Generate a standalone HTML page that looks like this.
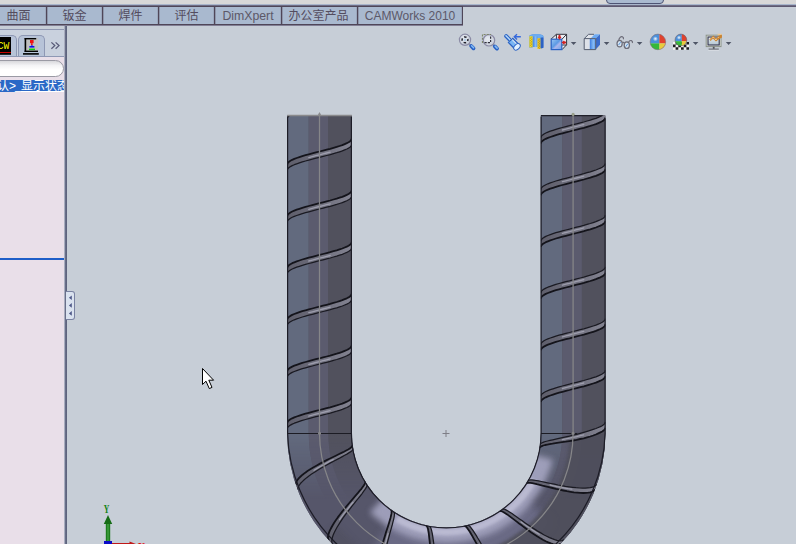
<!DOCTYPE html>
<html lang="zh-CN">
<head>
<meta charset="utf-8">
<title>SolidWorks</title>
<style>
html,body{margin:0;padding:0;}
body{width:796px;height:544px;overflow:hidden;position:relative;background:#c7ced7;
 font-family:"Liberation Sans","Noto Sans CJK SC",sans-serif;font-size:12px;color:#50485c;}
#topstrip{position:absolute;left:0;top:0;width:796px;height:4px;background:#d8d8d8;}
#topline1{position:absolute;left:0;top:4px;width:796px;height:1px;background:#a9b6cc;}
#topline2{position:absolute;left:0;top:5px;width:796px;height:2px;background:linear-gradient(#77768e,#544e66);}
#toptab{position:absolute;left:606px;top:-6px;width:56px;height:8px;background:#aabad0;border:1px solid #4e5474;border-radius:4px;}
#tabs{box-shadow:0 1px 0 #827f95;position:absolute;left:-10px;top:6px;height:17px;display:flex;background:#4f4658;padding:1px 1px 1px 0;}
#tabs .t{box-shadow:inset 1px 0 0 rgba(79,70,88,.3),inset -1px 0 0 rgba(79,70,88,.15);height:17px;line-height:19px;margin-left:1px;background:#a9b9cf;text-align:center;color:#544c5e;white-space:nowrap;font-size:12px;}
#tabs .t.en{color:#5c5868;font-size:12.5px;}
#panel{position:absolute;left:0;top:29px;width:64px;height:515px;background:#e9dfe9;overflow:hidden;}
#ptop{position:absolute;left:0;top:0;width:64px;height:1px;background:#8e96b0;}
#ptabs{position:absolute;left:0;top:1px;width:64px;height:26px;background:#c9d1de;}
#ptabline{position:absolute;left:0;top:27px;width:64px;height:1px;background:#8e98b4;}
.ptab{position:absolute;top:6px;height:21px;background:#b7c3d8;border:1px solid #8e98b4;border-bottom:none;border-radius:5px 5px 0 0;box-sizing:border-box;}
#search{position:absolute;left:-12px;top:31px;width:76px;height:17px;border:1px solid #9a9aa4;border-radius:9px;box-sizing:border-box;background:linear-gradient(#d8d8dc 0,#f4f4f6 30%,#ffffff 60%,#ffffff 100%);}
#sel{position:absolute;left:0;top:51px;width:64px;height:12px;background:#2a68c6;color:#fff;overflow:hidden;white-space:nowrap;}
#sel span{position:absolute;top:-2px;line-height:16px;font-size:12px;}
#blueline{position:absolute;left:0;top:229px;width:64px;height:2px;background:#1e5ec8;}
#pborder{position:absolute;left:64px;top:26px;width:3px;height:518px;background:linear-gradient(90deg,#d4d8e4 0,#6c728c 40%,#585e78 100%);}
#handle{position:absolute;left:66px;top:291px;width:9px;height:29px;background:#dae2ef;border:1px solid #7a82a2;border-left:none;border-radius:0 3px 3px 0;box-sizing:border-box;}
#view{position:absolute;left:0;top:0;}
</style>
</head>
<body>
<div id="topstrip"></div>
<div id="toptab"></div>
<div id="topline1"></div>
<div id="topline2"></div>

<div id="tabs">
 <div class="t" style="width:55px">曲面</div>
 <div class="t" style="width:55px">钣金</div>
 <div class="t" style="width:55px">焊件</div>
 <div class="t" style="width:55px">评估</div>
 <div class="t en" style="width:66px;font-size:12.3px">DimXpert</div>
 <div class="t" style="width:73px;padding-right:2px">办公室产品</div>
 <div class="t en" style="width:104px;font-size:12px">CAMWorks 2010</div>
</div>

<div id="panel">
 <div id="ptop"></div>
 <div id="ptabs"></div>
 <div class="ptab" style="left:-8px;width:25px"></div>
 <div class="ptab" style="left:18px;width:27px"></div>
 <div id="ptabline"></div>
 <div id="search"></div>
 <div id="sel"><span style="left:-3px">认</span><span style="left:9px">&gt;</span><span style="left:15px;top:-3px">_</span><span style="left:21px;text-decoration:underline">显示状态</span></div>
 <div id="blueline"></div>
</div>
<div id="pborder"></div>
<div id="handle"></div>

<svg id="view" width="796" height="544" viewBox="0 0 796 544">
<!--GEOM-->
<defs>
<clipPath id="body"><path d="M287.2,115.5 V433 A159.1,159.1 0 0 0 605.4,433 V115.5 H540.9 V433 A94.5,94.5 0 0 1 351.8,433 V115.5 Z"/></clipPath>
<filter id="bl3" x="-20%" y="-20%" width="140%" height="140%"><feGaussianBlur stdDeviation="3"/></filter>
<filter id="bl2" x="-20%" y="-20%" width="140%" height="140%"><feGaussianBlur stdDeviation="1.6"/></filter>
<linearGradient id="fadeL" x1="0" y1="433" x2="0" y2="500" gradientUnits="userSpaceOnUse"><stop offset="0" stop-color="#fff" stop-opacity="1"/><stop offset="1" stop-color="#fff" stop-opacity="0"/></linearGradient>
<mask id="mfade" maskUnits="userSpaceOnUse" x="250" y="420" width="400" height="130"><rect x="250" y="420" width="400" height="130" fill="url(#fadeL)"/></mask>
<linearGradient id="gGr" x1="0" y1="0" x2="1" y2="0"><stop offset="0" stop-color="#5e5e6b"/><stop offset="0.45" stop-color="#6c6c7a"/><stop offset="1" stop-color="#838391"/></linearGradient>
</defs>
<g clip-path="url(#body)">
<rect x="280" y="110" width="340" height="440" fill="#51515d"/>
<rect x="287.2" y="110" width="21.5" height="323" fill="#626a7e"/>
<rect x="308.8" y="110" width="19.5" height="323" fill="#5b5b6e"/>
<rect x="328.2" y="110" width="23.5" height="323" fill="#51515d"/>
<rect x="540.9" y="110" width="21.5" height="323" fill="#626a7e"/>
<rect x="562.4" y="110" width="19.5" height="323" fill="#5b5b6e"/>
<rect x="581.9" y="110" width="23.5" height="323" fill="#51515d"/>
<path d="M319.5,433 A126.8,126.8 0 0 0 573.1,433" fill="none" stroke="#56566a" stroke-width="66.5" />
<g mask="url(#mfade)">
<path d="M298,433 A148.3,148.3 0 0 0 372.1,561.4" fill="none" stroke="#626a7e" stroke-width="21.5" />
<path d="M318.5,433 A127.8,127.8 0 0 0 382.4,543.7" fill="none" stroke="#5b5b6e" stroke-width="19.5" />
<path d="M340,433 A106.3,106.3 0 0 0 393.1,525.1" fill="none" stroke="#51515d" stroke-width="23.5" />
<path d="M498.9,524.2 A105.3,105.3 0 0 0 551.6,433" fill="none" stroke="#626a7e" stroke-width="21.5" />
<path d="M509.2,541.9 A125.8,125.8 0 0 0 572.1,433" fill="none" stroke="#5b5b6e" stroke-width="19.5" />
<path d="M520,560.6 A147.3,147.3 0 0 0 593.6,433" fill="none" stroke="#51515d" stroke-width="23.5" />
</g>
<filter id="bl5" x="-20%" y="-20%" width="140%" height="140%"><feGaussianBlur stdDeviation="5"/></filter>
<path d="M382.3,535.4 A120.8,120.8 0 0 0 538.8,510.6" fill="none" stroke="#6e6e8a" stroke-width="34" filter="url(#bl5)" opacity="0.85"/>
<path d="M377.8,503.9 A98.5,98.5 0 0 0 541.9,456.8" fill="none" stroke="#a2a2be" stroke-width="23" filter="url(#bl3)" opacity="0.95"/>
<path d="M396.8,518.8 A99,99 0 0 0 533.8,479.5" fill="none" stroke="#c4c4da" stroke-width="7" filter="url(#bl2)" opacity="0.75"/>
<path d="M331.4,529.5 A150.1,150.1 0 0 0 472.4,580.8" fill="none" stroke="#4e4e5a" stroke-width="14" filter="url(#bl3)" opacity="0.45"/>
<path d="M461.1,574.3 A142.1,142.1 0 0 0 588.4,433" fill="none" stroke="#50505c" stroke-width="38" filter="url(#bl2)" opacity="0.92"/>
<path d="M287.2,433.5 H351.8" stroke="#1c1c24" stroke-width="1" fill="none"/>
<path d="M540.9,433.5 H577.1" stroke="#1c1c24" stroke-width="1" fill="none"/>
<polygon points="351.8,105.5 351.5,105.5 350.9,105.5 349.9,105.5 348.6,105.5 346.8,105.5 344.7,105.5 342.3,105.5 339.6,105.5 336.7,105.5 333.5,105.5 330.2,105.5 326.7,105.5 323.1,105.5 319.5,105.5 315.9,105.5 312.3,105.5 308.8,105.5 305.5,105.5 302.3,105.5 299.4,105.5 296.7,106.3 294.3,107.2 292.2,108.1 290.4,109.1 289.1,110 288.1,110.9 287.5,111.8 287.2,112.8 287.2,118.5 287.5,117.6 288.1,116.7 289.1,115.8 290.4,114.9 292.2,113.9 294.3,113 296.7,112.1 299.4,111.2 302.3,110.2 305.5,109.3 308.8,108.4 312.3,107.5 315.9,106.5 319.5,105.6 323.1,105.5 326.7,105.5 330.2,105.5 333.5,105.5 336.7,105.5 339.6,105.5 342.3,105.5 344.7,105.5 346.8,105.5 348.6,105.5 349.9,105.5 350.9,105.5 351.5,105.5 351.8,105.5" fill="url(#gGr)" stroke="none"/>
<polyline points="330.2,105.5 326.7,105.5 323.1,105.5 319.5,105.5 315.9,105.5 312.3,105.5 308.8,105.9" fill="none" stroke="#a9a9b9" stroke-width="1.3" stroke-linecap="round" opacity="0.8"/>
<polyline points="351.8,105.5 351.5,105.5 350.9,105.5 349.9,105.5 348.6,105.5 346.8,105.5 344.7,105.5 342.3,105.5 339.6,105.5 336.7,105.5 333.5,105.5 330.2,105.5 326.7,105.5 323.1,105.5 319.5,105.5 315.9,105.5 312.3,105.5 308.8,105.5 305.5,105.5 302.3,105.5 299.4,105.5 296.7,106.3 294.3,107.2 292.2,108.1 290.4,109.1 289.1,110 288.1,110.9 287.5,111.8 287.2,112.8" fill="none" stroke="#14141b" stroke-width="1.8" stroke-linejoin="round"/>
<polyline points="351.8,105.5 351.5,105.5 350.9,105.5 349.9,105.5 348.6,105.5 346.8,105.5 344.7,105.5 342.3,105.5 339.6,105.5 336.7,105.5 333.5,105.5 330.2,105.5 326.7,105.5 323.1,105.5 319.5,105.6 315.9,106.5 312.3,107.5 308.8,108.4 305.5,109.3 302.3,110.2 299.4,111.2 296.7,112.1 294.3,113 292.2,113.9 290.4,114.9 289.1,115.8 288.1,116.7 287.5,117.6 287.2,118.5" fill="none" stroke="#1a1a22" stroke-width="1.25" stroke-linejoin="round"/>
<polygon points="351.8,138.6 351.5,139.5 350.9,140.4 349.9,141.4 348.6,142.3 346.8,143.2 344.7,144.1 342.3,145.1 339.6,146 336.7,146.9 333.5,147.8 330.2,148.8 326.7,149.7 323.1,150.6 319.5,151.5 315.9,152.4 312.3,153.4 308.8,154.3 305.5,155.2 302.3,156.1 299.4,157.1 296.7,158 294.3,158.9 292.2,159.8 290.4,160.8 289.1,161.7 288.1,162.6 287.5,163.5 287.2,164.5 287.2,170.2 287.5,169.3 288.1,168.4 289.1,167.5 290.4,166.6 292.2,165.6 294.3,164.7 296.7,163.8 299.4,162.9 302.3,161.9 305.5,161 308.8,160.1 312.3,159.2 315.9,158.2 319.5,157.3 323.1,156.4 326.7,155.5 330.2,154.6 333.5,153.6 336.7,152.7 339.6,151.8 342.3,150.9 344.7,149.9 346.8,149 348.6,148.1 349.9,147.2 350.9,146.2 351.5,145.3 351.8,144.4" fill="url(#gGr)" stroke="none"/>
<polyline points="330.2,152.1 326.7,153 323.1,153.9 319.5,154.8 315.9,155.7 312.3,156.7 308.8,157.6" fill="none" stroke="#a9a9b9" stroke-width="1.3" stroke-linecap="round" opacity="0.8"/>
<polyline points="351.8,138.6 351.5,139.5 350.9,140.4 349.9,141.4 348.6,142.3 346.8,143.2 344.7,144.1 342.3,145.1 339.6,146 336.7,146.9 333.5,147.8 330.2,148.8 326.7,149.7 323.1,150.6 319.5,151.5 315.9,152.4 312.3,153.4 308.8,154.3 305.5,155.2 302.3,156.1 299.4,157.1 296.7,158 294.3,158.9 292.2,159.8 290.4,160.8 289.1,161.7 288.1,162.6 287.5,163.5 287.2,164.5" fill="none" stroke="#14141b" stroke-width="1.8" stroke-linejoin="round"/>
<polyline points="351.8,144.4 351.5,145.3 350.9,146.2 349.9,147.2 348.6,148.1 346.8,149 344.7,149.9 342.3,150.9 339.6,151.8 336.7,152.7 333.5,153.6 330.2,154.6 326.7,155.5 323.1,156.4 319.5,157.3 315.9,158.2 312.3,159.2 308.8,160.1 305.5,161 302.3,161.9 299.4,162.9 296.7,163.8 294.3,164.7 292.2,165.6 290.4,166.6 289.1,167.5 288.1,168.4 287.5,169.3 287.2,170.2" fill="none" stroke="#1a1a22" stroke-width="1.25" stroke-linejoin="round"/>
<polygon points="351.8,190.3 351.5,191.2 350.9,192.1 349.9,193.1 348.6,194 346.8,194.9 344.7,195.8 342.3,196.8 339.6,197.7 336.7,198.6 333.5,199.5 330.2,200.5 326.7,201.4 323.1,202.3 319.5,203.2 315.9,204.1 312.3,205.1 308.8,206 305.5,206.9 302.3,207.8 299.4,208.8 296.7,209.7 294.3,210.6 292.2,211.5 290.4,212.5 289.1,213.4 288.1,214.3 287.5,215.2 287.2,216.2 287.2,222 287.5,221 288.1,220.1 289.1,219.2 290.4,218.3 292.2,217.3 294.3,216.4 296.7,215.5 299.4,214.6 302.3,213.6 305.5,212.7 308.8,211.8 312.3,210.9 315.9,209.9 319.5,209 323.1,208.1 326.7,207.2 330.2,206.3 333.5,205.3 336.7,204.4 339.6,203.5 342.3,202.6 344.7,201.6 346.8,200.7 348.6,199.8 349.9,198.9 350.9,197.9 351.5,197 351.8,196.1" fill="url(#gGr)" stroke="none"/>
<polyline points="330.2,203.8 326.7,204.7 323.1,205.6 319.5,206.5 315.9,207.4 312.3,208.4 308.8,209.3" fill="none" stroke="#a9a9b9" stroke-width="1.3" stroke-linecap="round" opacity="0.8"/>
<polyline points="351.8,190.3 351.5,191.2 350.9,192.1 349.9,193.1 348.6,194 346.8,194.9 344.7,195.8 342.3,196.8 339.6,197.7 336.7,198.6 333.5,199.5 330.2,200.5 326.7,201.4 323.1,202.3 319.5,203.2 315.9,204.1 312.3,205.1 308.8,206 305.5,206.9 302.3,207.8 299.4,208.8 296.7,209.7 294.3,210.6 292.2,211.5 290.4,212.5 289.1,213.4 288.1,214.3 287.5,215.2 287.2,216.2" fill="none" stroke="#14141b" stroke-width="1.8" stroke-linejoin="round"/>
<polyline points="351.8,196.1 351.5,197 350.9,197.9 349.9,198.9 348.6,199.8 346.8,200.7 344.7,201.6 342.3,202.6 339.6,203.5 336.7,204.4 333.5,205.3 330.2,206.3 326.7,207.2 323.1,208.1 319.5,209 315.9,209.9 312.3,210.9 308.8,211.8 305.5,212.7 302.3,213.6 299.4,214.6 296.7,215.5 294.3,216.4 292.2,217.3 290.4,218.3 289.1,219.2 288.1,220.1 287.5,221 287.2,222" fill="none" stroke="#1a1a22" stroke-width="1.25" stroke-linejoin="round"/>
<polygon points="351.8,242 351.5,242.9 350.9,243.8 349.9,244.8 348.6,245.7 346.8,246.6 344.7,247.5 342.3,248.5 339.6,249.4 336.7,250.3 333.5,251.2 330.2,252.2 326.7,253.1 323.1,254 319.5,254.9 315.9,255.8 312.3,256.8 308.8,257.7 305.5,258.6 302.3,259.5 299.4,260.5 296.7,261.4 294.3,262.3 292.2,263.2 290.4,264.2 289.1,265.1 288.1,266 287.5,266.9 287.2,267.9 287.2,273.6 287.5,272.7 288.1,271.8 289.1,270.9 290.4,270 292.2,269 294.3,268.1 296.7,267.2 299.4,266.3 302.3,265.3 305.5,264.4 308.8,263.5 312.3,262.6 315.9,261.6 319.5,260.7 323.1,259.8 326.7,258.9 330.2,258 333.5,257 336.7,256.1 339.6,255.2 342.3,254.3 344.7,253.3 346.8,252.4 348.6,251.5 349.9,250.6 350.9,249.6 351.5,248.7 351.8,247.8" fill="url(#gGr)" stroke="none"/>
<polyline points="330.2,255.5 326.7,256.4 323.1,257.3 319.5,258.2 315.9,259.1 312.3,260.1 308.8,261" fill="none" stroke="#a9a9b9" stroke-width="1.3" stroke-linecap="round" opacity="0.8"/>
<polyline points="351.8,242 351.5,242.9 350.9,243.8 349.9,244.8 348.6,245.7 346.8,246.6 344.7,247.5 342.3,248.5 339.6,249.4 336.7,250.3 333.5,251.2 330.2,252.2 326.7,253.1 323.1,254 319.5,254.9 315.9,255.8 312.3,256.8 308.8,257.7 305.5,258.6 302.3,259.5 299.4,260.5 296.7,261.4 294.3,262.3 292.2,263.2 290.4,264.2 289.1,265.1 288.1,266 287.5,266.9 287.2,267.9" fill="none" stroke="#14141b" stroke-width="1.8" stroke-linejoin="round"/>
<polyline points="351.8,247.8 351.5,248.7 350.9,249.6 349.9,250.6 348.6,251.5 346.8,252.4 344.7,253.3 342.3,254.3 339.6,255.2 336.7,256.1 333.5,257 330.2,258 326.7,258.9 323.1,259.8 319.5,260.7 315.9,261.6 312.3,262.6 308.8,263.5 305.5,264.4 302.3,265.3 299.4,266.3 296.7,267.2 294.3,268.1 292.2,269 290.4,270 289.1,270.9 288.1,271.8 287.5,272.7 287.2,273.6" fill="none" stroke="#1a1a22" stroke-width="1.25" stroke-linejoin="round"/>
<polygon points="351.8,293.7 351.5,294.6 350.9,295.5 349.9,296.5 348.6,297.4 346.8,298.3 344.7,299.2 342.3,300.2 339.6,301.1 336.7,302 333.5,302.9 330.2,303.9 326.7,304.8 323.1,305.7 319.5,306.6 315.9,307.5 312.3,308.5 308.8,309.4 305.5,310.3 302.3,311.2 299.4,312.2 296.7,313.1 294.3,314 292.2,314.9 290.4,315.9 289.1,316.8 288.1,317.7 287.5,318.6 287.2,319.6 287.2,325.4 287.5,324.4 288.1,323.5 289.1,322.6 290.4,321.7 292.2,320.7 294.3,319.8 296.7,318.9 299.4,318 302.3,317 305.5,316.1 308.8,315.2 312.3,314.3 315.9,313.3 319.5,312.4 323.1,311.5 326.7,310.6 330.2,309.7 333.5,308.7 336.7,307.8 339.6,306.9 342.3,306 344.7,305 346.8,304.1 348.6,303.2 349.9,302.3 350.9,301.3 351.5,300.4 351.8,299.5" fill="url(#gGr)" stroke="none"/>
<polyline points="330.2,307.2 326.7,308.1 323.1,309 319.5,309.9 315.9,310.8 312.3,311.8 308.8,312.7" fill="none" stroke="#a9a9b9" stroke-width="1.3" stroke-linecap="round" opacity="0.8"/>
<polyline points="351.8,293.7 351.5,294.6 350.9,295.5 349.9,296.5 348.6,297.4 346.8,298.3 344.7,299.2 342.3,300.2 339.6,301.1 336.7,302 333.5,302.9 330.2,303.9 326.7,304.8 323.1,305.7 319.5,306.6 315.9,307.5 312.3,308.5 308.8,309.4 305.5,310.3 302.3,311.2 299.4,312.2 296.7,313.1 294.3,314 292.2,314.9 290.4,315.9 289.1,316.8 288.1,317.7 287.5,318.6 287.2,319.6" fill="none" stroke="#14141b" stroke-width="1.8" stroke-linejoin="round"/>
<polyline points="351.8,299.5 351.5,300.4 350.9,301.3 349.9,302.3 348.6,303.2 346.8,304.1 344.7,305 342.3,306 339.6,306.9 336.7,307.8 333.5,308.7 330.2,309.7 326.7,310.6 323.1,311.5 319.5,312.4 315.9,313.3 312.3,314.3 308.8,315.2 305.5,316.1 302.3,317 299.4,318 296.7,318.9 294.3,319.8 292.2,320.7 290.4,321.7 289.1,322.6 288.1,323.5 287.5,324.4 287.2,325.4" fill="none" stroke="#1a1a22" stroke-width="1.25" stroke-linejoin="round"/>
<polygon points="351.8,345.4 351.5,346.3 350.9,347.2 349.9,348.2 348.6,349.1 346.8,350 344.7,350.9 342.3,351.9 339.6,352.8 336.7,353.7 333.5,354.6 330.2,355.6 326.7,356.5 323.1,357.4 319.5,358.3 315.9,359.2 312.3,360.2 308.8,361.1 305.5,362 302.3,362.9 299.4,363.9 296.7,364.8 294.3,365.7 292.2,366.6 290.4,367.6 289.1,368.5 288.1,369.4 287.5,370.3 287.2,371.2 287.2,377.1 287.5,376.1 288.1,375.2 289.1,374.3 290.4,373.4 292.2,372.4 294.3,371.5 296.7,370.6 299.4,369.7 302.3,368.7 305.5,367.8 308.8,366.9 312.3,366 315.9,365 319.5,364.1 323.1,363.2 326.7,362.3 330.2,361.4 333.5,360.4 336.7,359.5 339.6,358.6 342.3,357.7 344.7,356.7 346.8,355.8 348.6,354.9 349.9,354 350.9,353 351.5,352.1 351.8,351.2" fill="url(#gGr)" stroke="none"/>
<polyline points="330.2,358.9 326.7,359.8 323.1,360.7 319.5,361.6 315.9,362.5 312.3,363.5 308.8,364.4" fill="none" stroke="#a9a9b9" stroke-width="1.3" stroke-linecap="round" opacity="0.8"/>
<polyline points="351.8,345.4 351.5,346.3 350.9,347.2 349.9,348.2 348.6,349.1 346.8,350 344.7,350.9 342.3,351.9 339.6,352.8 336.7,353.7 333.5,354.6 330.2,355.6 326.7,356.5 323.1,357.4 319.5,358.3 315.9,359.2 312.3,360.2 308.8,361.1 305.5,362 302.3,362.9 299.4,363.9 296.7,364.8 294.3,365.7 292.2,366.6 290.4,367.6 289.1,368.5 288.1,369.4 287.5,370.3 287.2,371.2" fill="none" stroke="#14141b" stroke-width="1.8" stroke-linejoin="round"/>
<polyline points="351.8,351.2 351.5,352.1 350.9,353 349.9,354 348.6,354.9 346.8,355.8 344.7,356.7 342.3,357.7 339.6,358.6 336.7,359.5 333.5,360.4 330.2,361.4 326.7,362.3 323.1,363.2 319.5,364.1 315.9,365 312.3,366 308.8,366.9 305.5,367.8 302.3,368.7 299.4,369.7 296.7,370.6 294.3,371.5 292.2,372.4 290.4,373.4 289.1,374.3 288.1,375.2 287.5,376.1 287.2,377.1" fill="none" stroke="#1a1a22" stroke-width="1.25" stroke-linejoin="round"/>
<polygon points="351.8,397.1 351.5,398 350.9,398.9 349.9,399.9 348.6,400.8 346.8,401.7 344.7,402.6 342.3,403.6 339.6,404.5 336.7,405.4 333.5,406.3 330.2,407.3 326.7,408.2 323.1,409.1 319.5,410 315.9,410.9 312.3,411.9 308.8,412.8 305.5,413.7 302.3,414.6 299.4,415.6 296.7,416.5 294.3,417.4 292.2,418.3 290.4,419.3 289.1,420.2 288.1,421.1 287.5,422 287.2,423 287.2,428.8 287.5,427.8 288.1,426.9 289.1,426 290.4,425.1 292.2,424.1 294.3,423.2 296.7,422.3 299.4,421.4 302.3,420.4 305.5,419.5 308.8,418.6 312.3,417.7 315.9,416.7 319.5,415.8 323.1,414.9 326.7,414 330.2,413.1 333.5,412.1 336.7,411.2 339.6,410.3 342.3,409.4 344.7,408.4 346.8,407.5 348.6,406.6 349.9,405.7 350.9,404.7 351.5,403.8 351.8,402.9" fill="url(#gGr)" stroke="none"/>
<polyline points="330.2,410.6 326.7,411.5 323.1,412.4 319.5,413.3 315.9,414.2 312.3,415.2 308.8,416.1" fill="none" stroke="#a9a9b9" stroke-width="1.3" stroke-linecap="round" opacity="0.8"/>
<polyline points="351.8,397.1 351.5,398 350.9,398.9 349.9,399.9 348.6,400.8 346.8,401.7 344.7,402.6 342.3,403.6 339.6,404.5 336.7,405.4 333.5,406.3 330.2,407.3 326.7,408.2 323.1,409.1 319.5,410 315.9,410.9 312.3,411.9 308.8,412.8 305.5,413.7 302.3,414.6 299.4,415.6 296.7,416.5 294.3,417.4 292.2,418.3 290.4,419.3 289.1,420.2 288.1,421.1 287.5,422 287.2,423" fill="none" stroke="#14141b" stroke-width="1.8" stroke-linejoin="round"/>
<polyline points="351.8,402.9 351.5,403.8 350.9,404.7 349.9,405.7 348.6,406.6 346.8,407.5 344.7,408.4 342.3,409.4 339.6,410.3 336.7,411.2 333.5,412.1 330.2,413.1 326.7,414 323.1,414.9 319.5,415.8 315.9,416.7 312.3,417.7 308.8,418.6 305.5,419.5 302.3,420.4 299.4,421.4 296.7,422.3 294.3,423.2 292.2,424.1 290.4,425.1 289.1,426 288.1,426.9 287.5,427.8 287.2,428.8" fill="none" stroke="#1a1a22" stroke-width="1.25" stroke-linejoin="round"/>
<polygon points="352.5,445.2 352.4,445.9 351.9,446.7 351,447.5 349.8,448.5 348.2,449.5 346.2,450.5 344,451.7 341.5,452.9 338.7,454.3 335.8,455.7 332.7,457.2 329.5,458.8 326.2,460.4 322.9,462.1 319.6,463.9 316.4,465.7 313.2,467.5 310.3,469.3 307.5,471.1 304.9,472.9 302.6,474.7 300.6,476.5 298.9,478.1 297.6,479.7 296.6,481.2 296,482.6 295.8,483.9 296,485.1 298,490.4 297.7,489.2 297.9,487.9 298.4,486.5 299.4,485 300.6,483.3 302.3,481.6 304.2,479.8 306.4,477.9 308.9,476 311.6,474.1 314.5,472.2 317.6,470.2 320.8,468.3 324,466.5 327.2,464.7 330.5,462.9 333.6,461.2 336.7,459.6 339.6,458.1 342.3,456.6 344.7,455.3 346.9,454.1 348.8,452.9 350.4,451.9 351.6,450.9 352.5,450.1 353,449.3 353,448.6" fill="url(#gGr)" stroke="none"/>
<polyline points="333.2,459.6 330,461.2 326.8,462.9 323.5,464.7 320.3,466.5 317.1,468.4 314,470.2" fill="none" stroke="#a9a9b9" stroke-width="1.3" stroke-linecap="round" opacity="0.8"/>
<polyline points="352.5,445.2 352.4,445.9 351.9,446.7 351,447.5 349.8,448.5 348.2,449.5 346.2,450.5 344,451.7 341.5,452.9 338.7,454.3 335.8,455.7 332.7,457.2 329.5,458.8 326.2,460.4 322.9,462.1 319.6,463.9 316.4,465.7 313.2,467.5 310.3,469.3 307.5,471.1 304.9,472.9 302.6,474.7 300.6,476.5 298.9,478.1 297.6,479.7 296.6,481.2 296,482.6 295.8,483.9 296,485.1" fill="none" stroke="#14141b" stroke-width="1.8" stroke-linejoin="round"/>
<polyline points="353,448.6 353,449.3 352.5,450.1 351.6,450.9 350.4,451.9 348.8,452.9 346.9,454.1 344.7,455.3 342.3,456.6 339.6,458.1 336.7,459.6 333.6,461.2 330.5,462.9 327.2,464.7 324,466.5 320.8,468.3 317.6,470.2 314.5,472.2 311.6,474.1 308.9,476 306.4,477.9 304.2,479.8 302.3,481.6 300.6,483.3 299.4,485 298.4,486.5 297.9,487.9 297.7,489.2 298,490.4" fill="none" stroke="#1a1a22" stroke-width="1.25" stroke-linejoin="round"/>
<polygon points="365.1,481.4 365.3,482.1 365.1,483 364.6,484.1 363.8,485.5 362.7,487 361.4,488.8 359.8,490.7 358,492.9 356,495.2 353.9,497.6 351.6,500.3 349.3,503 346.9,505.8 344.5,508.7 342.2,511.6 340,514.5 337.8,517.4 335.8,520.3 334,523 332.4,525.7 331,528.3 329.8,530.7 328.9,532.9 328.3,534.9 328,536.6 328,538.1 328.4,539.4 329,540.4 332.9,544.5 332.2,543.5 331.8,542.3 331.8,540.8 332,539 332.5,537 333.3,534.7 334.4,532.3 335.7,529.7 337.2,527 339,524.1 340.9,521.2 342.9,518.2 345.1,515.2 347.3,512.2 349.6,509.3 351.8,506.4 354.1,503.6 356.2,500.9 358.3,498.3 360.2,496 361.9,493.8 363.4,491.7 364.7,489.9 365.7,488.4 366.5,487 366.9,485.9 367.1,484.9 366.8,484.3" fill="url(#gGr)" stroke="none"/>
<polyline points="353,502.2 350.8,505 348.5,507.8 346.2,510.8 343.9,513.7 341.7,516.7 339.6,519.7" fill="none" stroke="#a9a9b9" stroke-width="1.3" stroke-linecap="round" opacity="0.8"/>
<polyline points="365.1,481.4 365.3,482.1 365.1,483 364.6,484.1 363.8,485.5 362.7,487 361.4,488.8 359.8,490.7 358,492.9 356,495.2 353.9,497.6 351.6,500.3 349.3,503 346.9,505.8 344.5,508.7 342.2,511.6 340,514.5 337.8,517.4 335.8,520.3 334,523 332.4,525.7 331,528.3 329.8,530.7 328.9,532.9 328.3,534.9 328,536.6 328,538.1 328.4,539.4 329,540.4" fill="none" stroke="#14141b" stroke-width="1.8" stroke-linejoin="round"/>
<polyline points="366.8,484.3 367.1,484.9 366.9,485.9 366.5,487 365.7,488.4 364.7,489.9 363.4,491.7 361.9,493.8 360.2,496 358.3,498.3 356.2,500.9 354.1,503.6 351.8,506.4 349.6,509.3 347.3,512.2 345.1,515.2 342.9,518.2 340.9,521.2 339,524.1 337.2,527 335.7,529.7 334.4,532.3 333.3,534.7 332.5,537 332,539 331.8,540.8 331.8,542.3 332.2,543.5 332.9,544.5" fill="none" stroke="#1a1a22" stroke-width="1.25" stroke-linejoin="round"/>
<polygon points="390.9,509.6 391.4,510.2 391.6,511.1 391.6,512.3 391.4,513.9 391,515.7 390.5,517.9 389.8,520.3 389,523 388.1,525.9 387.1,529 386,532.3 385,535.7 383.9,539.2 382.9,542.8 381.9,546.4 381,550 380.2,553.5 379.5,556.9 378.9,560.2 378.5,563.3 378.2,566.2 378.1,568.8 378.1,571.2 378.4,573.3 378.8,575 379.4,576.4 380.2,577.5 381.2,578.1 386.4,580.3 385.4,579.7 384.6,578.7 383.9,577.3 383.4,575.6 383.1,573.5 382.9,571.2 383,568.5 383.1,565.6 383.5,562.5 383.9,559.2 384.5,555.8 385.2,552.2 386,548.6 386.8,545 387.7,541.4 388.7,537.8 389.6,534.4 390.5,531 391.4,527.9 392.2,525 392.9,522.2 393.5,519.8 394,517.6 394.3,515.8 394.4,514.2 394.4,513 394.1,512.1 393.7,511.6" fill="url(#gGr)" stroke="none"/>
<polyline points="388.1,533.5 387.1,537 386.2,540.5 385.2,544.1 384.3,547.7 383.5,551.3 382.7,554.9" fill="none" stroke="#a9a9b9" stroke-width="1.3" stroke-linecap="round" opacity="0.8"/>
<polyline points="390.9,509.6 391.4,510.2 391.6,511.1 391.6,512.3 391.4,513.9 391,515.7 390.5,517.9 389.8,520.3 389,523 388.1,525.9 387.1,529 386,532.3 385,535.7 383.9,539.2 382.9,542.8 381.9,546.4 381,550 380.2,553.5 379.5,556.9 378.9,560.2 378.5,563.3 378.2,566.2 378.1,568.8 378.1,571.2 378.4,573.3 378.8,575 379.4,576.4 380.2,577.5 381.2,578.1" fill="none" stroke="#14141b" stroke-width="1.8" stroke-linejoin="round"/>
<polyline points="393.7,511.6 394.1,512.1 394.4,513 394.4,514.2 394.3,515.8 394,517.6 393.5,519.8 392.9,522.2 392.2,525 391.4,527.9 390.5,531 389.6,534.4 388.7,537.8 387.7,541.4 386.8,545 386,548.6 385.2,552.2 384.5,555.8 383.9,559.2 383.5,562.5 383.1,565.6 383,568.5 382.9,571.2 383.1,573.5 383.4,575.6 383.9,577.3 384.6,578.7 385.4,579.7 386.4,580.3" fill="none" stroke="#1a1a22" stroke-width="1.25" stroke-linejoin="round"/>
<polygon points="425.9,525.3 426.5,525.7 427,526.4 427.5,527.5 428,529 428.3,530.9 428.7,533 429,535.6 429.3,538.3 429.7,541.4 430,544.6 430.3,548 430.7,551.6 431.2,555.3 431.6,558.9 432.2,562.6 432.7,566.3 433.4,569.8 434.1,573.3 434.9,576.5 435.7,579.5 436.6,582.3 437.5,584.8 438.5,586.9 439.6,588.7 440.7,590.1 441.8,591.2 442.9,591.8 444.1,592 449.7,592 448.6,591.8 447.4,591.2 446.2,590.2 445.1,588.9 444,587.1 442.9,585 441.9,582.5 440.9,579.8 440,576.8 439.1,573.6 438.2,570.2 437.5,566.7 436.8,563.1 436.1,559.4 435.5,555.7 435,552.1 434.4,548.5 434,545.1 433.5,541.9 433.1,538.9 432.7,536.1 432.3,533.6 431.8,531.4 431.4,529.6 430.9,528.1 430.4,527 429.8,526.3 429.2,526" fill="url(#gGr)" stroke="none"/>
<polyline points="432.8,548.4 433.2,551.9 433.7,555.5 434.3,559.2 434.9,562.9 435.5,566.5 436.2,570.1" fill="none" stroke="#a9a9b9" stroke-width="1.3" stroke-linecap="round" opacity="0.8"/>
<polyline points="425.9,525.3 426.5,525.7 427,526.4 427.5,527.5 428,529 428.3,530.9 428.7,533 429,535.6 429.3,538.3 429.7,541.4 430,544.6 430.3,548 430.7,551.6 431.2,555.3 431.6,558.9 432.2,562.6 432.7,566.3 433.4,569.8 434.1,573.3 434.9,576.5 435.7,579.5 436.6,582.3 437.5,584.8 438.5,586.9 439.6,588.7 440.7,590.1 441.8,591.2 442.9,591.8 444.1,592" fill="none" stroke="#14141b" stroke-width="1.8" stroke-linejoin="round"/>
<polyline points="429.2,526 429.8,526.3 430.4,527 430.9,528.1 431.4,529.6 431.8,531.4 432.3,533.6 432.7,536.1 433.1,538.9 433.5,541.9 434,545.1 434.4,548.5 435,552.1 435.5,555.7 436.1,559.4 436.8,563.1 437.5,566.7 438.2,570.2 439.1,573.6 440,576.8 440.9,579.8 441.9,582.5 442.9,585 444,587.1 445.1,588.9 446.2,590.2 447.4,591.2 448.6,591.8 449.7,592" fill="none" stroke="#1a1a22" stroke-width="1.25" stroke-linejoin="round"/>
<polygon points="464.1,525.9 464.9,525.9 465.7,526.4 466.5,527.2 467.5,528.4 468.6,530 469.8,531.8 471.1,534 472.5,536.4 474,539.1 475.6,541.9 477.3,544.9 479,548.1 480.9,551.2 482.8,554.4 484.7,557.6 486.7,560.7 488.7,563.7 490.7,566.6 492.7,569.3 494.7,571.7 496.6,573.9 498.4,575.8 500.2,577.4 501.9,578.6 503.4,579.5 504.9,580 506.2,580.1 507.3,579.9 512.5,577.6 511.4,577.9 510,577.8 508.6,577.4 507,576.5 505.3,575.4 503.5,573.9 501.5,572 499.6,569.9 497.5,567.5 495.4,564.9 493.3,562.2 491.2,559.2 489.1,556.2 487.1,553.1 485.1,549.9 483.1,546.8 481.2,543.8 479.4,540.8 477.7,538 476.2,535.4 474.7,533.1 473.3,530.9 472,529.1 470.9,527.6 469.9,526.4 469,525.6 468.1,525.2 467.4,525.2" fill="url(#gGr)" stroke="none"/>
<polyline points="479.6,544.3 481.4,547.3 483.3,550.5 485.3,553.7 487.3,556.8 489.4,559.9 491.4,562.8" fill="none" stroke="#a9a9b9" stroke-width="1.3" stroke-linecap="round" opacity="0.8"/>
<polyline points="464.1,525.9 464.9,525.9 465.7,526.4 466.5,527.2 467.5,528.4 468.6,530 469.8,531.8 471.1,534 472.5,536.4 474,539.1 475.6,541.9 477.3,544.9 479,548.1 480.9,551.2 482.8,554.4 484.7,557.6 486.7,560.7 488.7,563.7 490.7,566.6 492.7,569.3 494.7,571.7 496.6,573.9 498.4,575.8 500.2,577.4 501.9,578.6 503.4,579.5 504.9,580 506.2,580.1 507.3,579.9" fill="none" stroke="#14141b" stroke-width="1.8" stroke-linejoin="round"/>
<polyline points="467.4,525.2 468.1,525.2 469,525.6 469.9,526.4 470.9,527.6 472,529.1 473.3,530.9 474.7,533.1 476.2,535.4 477.7,538 479.4,540.8 481.2,543.8 483.1,546.8 485.1,549.9 487.1,553.1 489.1,556.2 491.2,559.2 493.3,562.2 495.4,564.9 497.5,567.5 499.6,569.9 501.5,572 503.5,573.9 505.3,575.4 507,576.5 508.6,577.4 510,577.8 511.4,577.9 512.5,577.6" fill="none" stroke="#1a1a22" stroke-width="1.25" stroke-linejoin="round"/>
<polygon points="499.5,511.2 500.2,510.9 501.1,511 502.2,511.5 503.6,512.2 505.2,513.2 507.1,514.4 509.1,515.9 511.4,517.6 513.8,519.4 516.4,521.4 519.1,523.5 522,525.6 524.9,527.8 527.9,530 531,532.2 534,534.2 537.1,536.2 540,538 542.9,539.7 545.7,541.2 548.3,542.4 550.8,543.4 553,544.2 555.1,544.6 556.8,544.8 558.4,544.7 559.6,544.3 560.6,543.6 564.4,539.5 563.5,540.2 562.3,540.7 560.7,540.8 558.9,540.7 556.9,540.3 554.6,539.6 552.1,538.7 549.5,537.6 546.7,536.2 543.7,534.7 540.7,532.9 537.6,531.1 534.5,529.1 531.3,527.1 528.2,525 525.2,522.9 522.3,520.8 519.5,518.9 516.8,517 514.3,515.2 512,513.6 509.9,512.2 508,511 506.4,510.1 505,509.4 503.8,509 502.9,509 502.2,509.2" fill="url(#gGr)" stroke="none"/>
<polyline points="521,521.9 523.9,524 526.9,526.2 529.9,528.3 533,530.4 536.1,532.4 539.2,534.3" fill="none" stroke="#a9a9b9" stroke-width="1.3" stroke-linecap="round" opacity="0.8"/>
<polyline points="499.5,511.2 500.2,510.9 501.1,511 502.2,511.5 503.6,512.2 505.2,513.2 507.1,514.4 509.1,515.9 511.4,517.6 513.8,519.4 516.4,521.4 519.1,523.5 522,525.6 524.9,527.8 527.9,530 531,532.2 534,534.2 537.1,536.2 540,538 542.9,539.7 545.7,541.2 548.3,542.4 550.8,543.4 553,544.2 555.1,544.6 556.8,544.8 558.4,544.7 559.6,544.3 560.6,543.6" fill="none" stroke="#14141b" stroke-width="1.8" stroke-linejoin="round"/>
<polyline points="502.2,509.2 502.9,509 503.8,509 505,509.4 506.4,510.1 508,511 509.9,512.2 512,513.6 514.3,515.2 516.8,517 519.5,518.9 522.3,520.8 525.2,522.9 528.2,525 531.3,527.1 534.5,529.1 537.6,531.1 540.7,532.9 543.7,534.7 546.7,536.2 549.5,537.6 552.1,538.7 554.6,539.6 556.9,540.3 558.9,540.7 560.7,540.8 562.3,540.7 563.5,540.2 564.4,539.5" fill="none" stroke="#1a1a22" stroke-width="1.25" stroke-linejoin="round"/>
<polygon points="526.1,483.7 526.7,483.2 527.5,482.9 528.8,482.8 530.3,482.9 532.2,483.2 534.4,483.6 536.8,484.2 539.6,484.8 542.5,485.6 545.7,486.4 549,487.2 552.5,488 556.1,488.9 559.7,489.7 563.4,490.5 567,491.2 570.6,491.8 574,492.3 577.3,492.6 580.4,492.9 583.4,493 586,492.9 588.4,492.7 590.4,492.4 592.1,491.8 593.5,491.1 594.5,490.3 595.1,489.3 597,484 596.4,485 595.4,485.9 594.1,486.6 592.4,487.2 590.4,487.7 588,487.9 585.4,488.1 582.5,488.1 579.4,488 576,487.7 572.6,487.3 569,486.8 565.3,486.3 561.7,485.6 558,485 554.4,484.2 550.9,483.5 547.5,482.8 544.3,482.1 541.3,481.5 538.6,480.9 536.1,480.5 533.9,480.1 532,479.9 530.5,479.9 529.3,480 528.4,480.3 527.9,480.8" fill="url(#gGr)" stroke="none"/>
<polyline points="550.1,485 553.6,485.8 557.2,486.6 560.9,487.3 564.5,488 568.2,488.6 571.8,489.1" fill="none" stroke="#a9a9b9" stroke-width="1.3" stroke-linecap="round" opacity="0.8"/>
<polyline points="526.1,483.7 526.7,483.2 527.5,482.9 528.8,482.8 530.3,482.9 532.2,483.2 534.4,483.6 536.8,484.2 539.6,484.8 542.5,485.6 545.7,486.4 549,487.2 552.5,488 556.1,488.9 559.7,489.7 563.4,490.5 567,491.2 570.6,491.8 574,492.3 577.3,492.6 580.4,492.9 583.4,493 586,492.9 588.4,492.7 590.4,492.4 592.1,491.8 593.5,491.1 594.5,490.3 595.1,489.3" fill="none" stroke="#14141b" stroke-width="1.8" stroke-linejoin="round"/>
<polyline points="527.9,480.8 528.4,480.3 529.3,480 530.5,479.9 532,479.9 533.9,480.1 536.1,480.5 538.6,480.9 541.3,481.5 544.3,482.1 547.5,482.8 550.9,483.5 554.4,484.2 558,485 561.7,485.6 565.3,486.3 569,486.8 572.6,487.3 576,487.7 579.4,488 582.5,488.1 585.4,488.1 588,487.9 590.4,487.7 592.4,487.2 594.1,486.6 595.4,485.9 596.4,485 597,484" fill="none" stroke="#1a1a22" stroke-width="1.25" stroke-linejoin="round"/>
<polygon points="539.7,447.9 540,447.2 540.7,446.6 541.8,446.1 543.2,445.5 545.1,445 547.2,444.6 549.7,444.1 552.5,443.7 555.5,443.2 558.7,442.7 562.1,442.2 565.6,441.7 569.2,441.1 572.9,440.5 576.5,439.8 580.1,439 583.7,438.3 587,437.4 590.2,436.5 593.2,435.5 595.9,434.5 598.3,433.4 600.4,432.4 602.2,431.5 603.5,430.6 604.5,429.7 605.1,428.7 605.4,427.8 605.4,422 605.1,422.9 604.5,423.9 603.5,424.8 602.2,425.7 600.4,426.6 598.3,427.5 595.9,428.5 593.2,429.4 590.3,430.3 587.1,431.3 583.8,432.3 580.3,433.3 576.7,434.3 573.1,435.2 569.5,436.1 565.9,436.9 562.4,437.7 559,438.4 555.8,439.1 552.8,439.8 550,440.4 547.6,441 545.4,441.5 543.6,442.1 542.2,442.7 541.1,443.3 540.4,443.9 540.1,444.5" fill="url(#gGr)" stroke="none"/>
<polyline points="562.3,439.6 565.8,438.9 569.4,438.2 573,437.4 576.7,436.6 580.2,435.7 583.7,434.8" fill="none" stroke="#a9a9b9" stroke-width="1.3" stroke-linecap="round" opacity="0.8"/>
<polyline points="539.7,447.9 540,447.2 540.7,446.6 541.8,446.1 543.2,445.5 545.1,445 547.2,444.6 549.7,444.1 552.5,443.7 555.5,443.2 558.7,442.7 562.1,442.2 565.6,441.7 569.2,441.1 572.9,440.5 576.5,439.8 580.1,439 583.7,438.3 587,437.4 590.2,436.5 593.2,435.5 595.9,434.5 598.3,433.4 600.4,432.4 602.2,431.5 603.5,430.6 604.5,429.7 605.1,428.7 605.4,427.8" fill="none" stroke="#14141b" stroke-width="1.8" stroke-linejoin="round"/>
<polyline points="540.1,444.5 540.4,443.9 541.1,443.3 542.2,442.7 543.6,442.1 545.4,441.5 547.6,441 550,440.4 552.8,439.8 555.8,439.1 559,438.4 562.4,437.7 565.9,436.9 569.5,436.1 573.1,435.2 576.7,434.3 580.3,433.3 583.8,432.3 587.1,431.3 590.3,430.3 593.2,429.4 595.9,428.5 598.3,427.5 600.4,426.6 602.2,425.7 603.5,424.8 604.5,423.9 605.1,422.9 605.4,422" fill="none" stroke="#1a1a22" stroke-width="1.25" stroke-linejoin="round"/>
<polygon points="540.9,402 541.1,401 541.7,400.1 542.7,399.2 544,398.3 545.8,397.3 547.9,396.4 550.3,395.5 553,394.6 555.9,393.6 559.1,392.7 562.4,391.8 565.9,390.9 569.5,390 573.1,389 576.7,388.1 580.3,387.2 583.8,386.3 587.1,385.3 590.3,384.4 593.2,383.5 595.9,382.6 598.3,381.6 600.4,380.7 602.2,379.8 603.5,378.9 604.5,378 605.1,377 605.4,376.1 605.4,370.3 605.1,371.2 604.5,372.2 603.5,373.1 602.2,374 600.4,374.9 598.3,375.8 595.9,376.8 593.2,377.7 590.3,378.6 587.1,379.5 583.8,380.5 580.3,381.4 576.7,382.3 573.1,383.2 569.5,384.2 565.9,385.1 562.4,386 559.1,386.9 555.9,387.8 553,388.8 550.3,389.7 547.9,390.6 545.8,391.5 544,392.5 542.7,393.4 541.7,394.3 541.1,395.2 540.9,396.2" fill="url(#gGr)" stroke="none"/>
<polyline points="562.4,388.5 565.9,387.6 569.5,386.7 573.1,385.7 576.7,384.8 580.3,383.9 583.8,383" fill="none" stroke="#a9a9b9" stroke-width="1.3" stroke-linecap="round" opacity="0.8"/>
<polyline points="540.9,402 541.1,401 541.7,400.1 542.7,399.2 544,398.3 545.8,397.3 547.9,396.4 550.3,395.5 553,394.6 555.9,393.6 559.1,392.7 562.4,391.8 565.9,390.9 569.5,390 573.1,389 576.7,388.1 580.3,387.2 583.8,386.3 587.1,385.3 590.3,384.4 593.2,383.5 595.9,382.6 598.3,381.6 600.4,380.7 602.2,379.8 603.5,378.9 604.5,378 605.1,377 605.4,376.1" fill="none" stroke="#14141b" stroke-width="1.8" stroke-linejoin="round"/>
<polyline points="540.9,396.2 541.1,395.2 541.7,394.3 542.7,393.4 544,392.5 545.8,391.5 547.9,390.6 550.3,389.7 553,388.8 555.9,387.8 559.1,386.9 562.4,386 565.9,385.1 569.5,384.2 573.1,383.2 576.7,382.3 580.3,381.4 583.8,380.5 587.1,379.5 590.3,378.6 593.2,377.7 595.9,376.8 598.3,375.8 600.4,374.9 602.2,374 603.5,373.1 604.5,372.2 605.1,371.2 605.4,370.3" fill="none" stroke="#1a1a22" stroke-width="1.25" stroke-linejoin="round"/>
<polygon points="540.9,350.3 541.1,349.3 541.7,348.4 542.7,347.5 544,346.6 545.8,345.6 547.9,344.7 550.3,343.8 553,342.9 555.9,341.9 559.1,341 562.4,340.1 565.9,339.2 569.5,338.3 573.1,337.3 576.7,336.4 580.3,335.5 583.8,334.6 587.1,333.6 590.3,332.7 593.2,331.8 595.9,330.9 598.3,329.9 600.4,329 602.2,328.1 603.5,327.2 604.5,326.3 605.1,325.3 605.4,324.4 605.4,318.6 605.1,319.5 604.5,320.5 603.5,321.4 602.2,322.3 600.4,323.2 598.3,324.1 595.9,325.1 593.2,326 590.3,326.9 587.1,327.8 583.8,328.8 580.3,329.7 576.7,330.6 573.1,331.5 569.5,332.5 565.9,333.4 562.4,334.3 559.1,335.2 555.9,336.1 553,337.1 550.3,338 547.9,338.9 545.8,339.8 544,340.8 542.7,341.7 541.7,342.6 541.1,343.5 540.9,344.5" fill="url(#gGr)" stroke="none"/>
<polyline points="562.4,336.8 565.9,335.9 569.5,335 573.1,334 576.7,333.1 580.3,332.2 583.8,331.3" fill="none" stroke="#a9a9b9" stroke-width="1.3" stroke-linecap="round" opacity="0.8"/>
<polyline points="540.9,350.3 541.1,349.3 541.7,348.4 542.7,347.5 544,346.6 545.8,345.6 547.9,344.7 550.3,343.8 553,342.9 555.9,341.9 559.1,341 562.4,340.1 565.9,339.2 569.5,338.3 573.1,337.3 576.7,336.4 580.3,335.5 583.8,334.6 587.1,333.6 590.3,332.7 593.2,331.8 595.9,330.9 598.3,329.9 600.4,329 602.2,328.1 603.5,327.2 604.5,326.3 605.1,325.3 605.4,324.4" fill="none" stroke="#14141b" stroke-width="1.8" stroke-linejoin="round"/>
<polyline points="540.9,344.5 541.1,343.5 541.7,342.6 542.7,341.7 544,340.8 545.8,339.8 547.9,338.9 550.3,338 553,337.1 555.9,336.1 559.1,335.2 562.4,334.3 565.9,333.4 569.5,332.5 573.1,331.5 576.7,330.6 580.3,329.7 583.8,328.8 587.1,327.8 590.3,326.9 593.2,326 595.9,325.1 598.3,324.1 600.4,323.2 602.2,322.3 603.5,321.4 604.5,320.5 605.1,319.5 605.4,318.6" fill="none" stroke="#1a1a22" stroke-width="1.25" stroke-linejoin="round"/>
<polygon points="540.9,298.6 541.1,297.6 541.7,296.7 542.7,295.8 544,294.9 545.8,293.9 547.9,293 550.3,292.1 553,291.2 555.9,290.2 559.1,289.3 562.4,288.4 565.9,287.5 569.5,286.6 573.1,285.6 576.7,284.7 580.3,283.8 583.8,282.9 587.1,281.9 590.3,281 593.2,280.1 595.9,279.2 598.3,278.2 600.4,277.3 602.2,276.4 603.5,275.5 604.5,274.6 605.1,273.6 605.4,272.7 605.4,266.9 605.1,267.8 604.5,268.8 603.5,269.7 602.2,270.6 600.4,271.5 598.3,272.4 595.9,273.4 593.2,274.3 590.3,275.2 587.1,276.1 583.8,277.1 580.3,278 576.7,278.9 573.1,279.8 569.5,280.8 565.9,281.7 562.4,282.6 559.1,283.5 555.9,284.4 553,285.4 550.3,286.3 547.9,287.2 545.8,288.1 544,289.1 542.7,290 541.7,290.9 541.1,291.8 540.9,292.8" fill="url(#gGr)" stroke="none"/>
<polyline points="562.4,285.1 565.9,284.2 569.5,283.3 573.1,282.3 576.7,281.4 580.3,280.5 583.8,279.6" fill="none" stroke="#a9a9b9" stroke-width="1.3" stroke-linecap="round" opacity="0.8"/>
<polyline points="540.9,298.6 541.1,297.6 541.7,296.7 542.7,295.8 544,294.9 545.8,293.9 547.9,293 550.3,292.1 553,291.2 555.9,290.2 559.1,289.3 562.4,288.4 565.9,287.5 569.5,286.6 573.1,285.6 576.7,284.7 580.3,283.8 583.8,282.9 587.1,281.9 590.3,281 593.2,280.1 595.9,279.2 598.3,278.2 600.4,277.3 602.2,276.4 603.5,275.5 604.5,274.6 605.1,273.6 605.4,272.7" fill="none" stroke="#14141b" stroke-width="1.8" stroke-linejoin="round"/>
<polyline points="540.9,292.8 541.1,291.8 541.7,290.9 542.7,290 544,289.1 545.8,288.1 547.9,287.2 550.3,286.3 553,285.4 555.9,284.4 559.1,283.5 562.4,282.6 565.9,281.7 569.5,280.8 573.1,279.8 576.7,278.9 580.3,278 583.8,277.1 587.1,276.1 590.3,275.2 593.2,274.3 595.9,273.4 598.3,272.4 600.4,271.5 602.2,270.6 603.5,269.7 604.5,268.8 605.1,267.8 605.4,266.9" fill="none" stroke="#1a1a22" stroke-width="1.25" stroke-linejoin="round"/>
<polygon points="540.9,246.9 541.1,245.9 541.7,245 542.7,244.1 544,243.2 545.8,242.2 547.9,241.3 550.3,240.4 553,239.5 555.9,238.5 559.1,237.6 562.4,236.7 565.9,235.8 569.5,234.9 573.1,233.9 576.7,233 580.3,232.1 583.8,231.2 587.1,230.2 590.3,229.3 593.2,228.4 595.9,227.5 598.3,226.5 600.4,225.6 602.2,224.7 603.5,223.8 604.5,222.9 605.1,221.9 605.4,221 605.4,215.2 605.1,216.1 604.5,217.1 603.5,218 602.2,218.9 600.4,219.8 598.3,220.7 595.9,221.7 593.2,222.6 590.3,223.5 587.1,224.4 583.8,225.4 580.3,226.3 576.7,227.2 573.1,228.1 569.5,229.1 565.9,230 562.4,230.9 559.1,231.8 555.9,232.7 553,233.7 550.3,234.6 547.9,235.5 545.8,236.4 544,237.4 542.7,238.3 541.7,239.2 541.1,240.1 540.9,241.1" fill="url(#gGr)" stroke="none"/>
<polyline points="562.4,233.4 565.9,232.5 569.5,231.6 573.1,230.6 576.7,229.7 580.3,228.8 583.8,227.9" fill="none" stroke="#a9a9b9" stroke-width="1.3" stroke-linecap="round" opacity="0.8"/>
<polyline points="540.9,246.9 541.1,245.9 541.7,245 542.7,244.1 544,243.2 545.8,242.2 547.9,241.3 550.3,240.4 553,239.5 555.9,238.5 559.1,237.6 562.4,236.7 565.9,235.8 569.5,234.9 573.1,233.9 576.7,233 580.3,232.1 583.8,231.2 587.1,230.2 590.3,229.3 593.2,228.4 595.9,227.5 598.3,226.5 600.4,225.6 602.2,224.7 603.5,223.8 604.5,222.9 605.1,221.9 605.4,221" fill="none" stroke="#14141b" stroke-width="1.8" stroke-linejoin="round"/>
<polyline points="540.9,241.1 541.1,240.1 541.7,239.2 542.7,238.3 544,237.4 545.8,236.4 547.9,235.5 550.3,234.6 553,233.7 555.9,232.7 559.1,231.8 562.4,230.9 565.9,230 569.5,229.1 573.1,228.1 576.7,227.2 580.3,226.3 583.8,225.4 587.1,224.4 590.3,223.5 593.2,222.6 595.9,221.7 598.3,220.7 600.4,219.8 602.2,218.9 603.5,218 604.5,217.1 605.1,216.1 605.4,215.2" fill="none" stroke="#1a1a22" stroke-width="1.25" stroke-linejoin="round"/>
<polygon points="540.9,195.2 541.1,194.2 541.7,193.3 542.7,192.4 544,191.5 545.8,190.5 547.9,189.6 550.3,188.7 553,187.8 555.9,186.8 559.1,185.9 562.4,185 565.9,184.1 569.5,183.2 573.1,182.2 576.7,181.3 580.3,180.4 583.8,179.5 587.1,178.5 590.3,177.6 593.2,176.7 595.9,175.8 598.3,174.8 600.4,173.9 602.2,173 603.5,172.1 604.5,171.2 605.1,170.2 605.4,169.3 605.4,163.5 605.1,164.4 604.5,165.4 603.5,166.3 602.2,167.2 600.4,168.1 598.3,169 595.9,170 593.2,170.9 590.3,171.8 587.1,172.7 583.8,173.7 580.3,174.6 576.7,175.5 573.1,176.4 569.5,177.4 565.9,178.3 562.4,179.2 559.1,180.1 555.9,181 553,182 550.3,182.9 547.9,183.8 545.8,184.7 544,185.7 542.7,186.6 541.7,187.5 541.1,188.4 540.9,189.4" fill="url(#gGr)" stroke="none"/>
<polyline points="562.4,181.7 565.9,180.8 569.5,179.9 573.1,178.9 576.7,178 580.3,177.1 583.8,176.2" fill="none" stroke="#a9a9b9" stroke-width="1.3" stroke-linecap="round" opacity="0.8"/>
<polyline points="540.9,195.2 541.1,194.2 541.7,193.3 542.7,192.4 544,191.5 545.8,190.5 547.9,189.6 550.3,188.7 553,187.8 555.9,186.8 559.1,185.9 562.4,185 565.9,184.1 569.5,183.2 573.1,182.2 576.7,181.3 580.3,180.4 583.8,179.5 587.1,178.5 590.3,177.6 593.2,176.7 595.9,175.8 598.3,174.8 600.4,173.9 602.2,173 603.5,172.1 604.5,171.2 605.1,170.2 605.4,169.3" fill="none" stroke="#14141b" stroke-width="1.8" stroke-linejoin="round"/>
<polyline points="540.9,189.4 541.1,188.4 541.7,187.5 542.7,186.6 544,185.7 545.8,184.7 547.9,183.8 550.3,182.9 553,182 555.9,181 559.1,180.1 562.4,179.2 565.9,178.3 569.5,177.4 573.1,176.4 576.7,175.5 580.3,174.6 583.8,173.7 587.1,172.7 590.3,171.8 593.2,170.9 595.9,170 598.3,169 600.4,168.1 602.2,167.2 603.5,166.3 604.5,165.4 605.1,164.4 605.4,163.5" fill="none" stroke="#1a1a22" stroke-width="1.25" stroke-linejoin="round"/>
<polygon points="540.9,143.5 541.1,142.5 541.7,141.6 542.7,140.7 544,139.8 545.8,138.8 547.9,137.9 550.3,137 553,136.1 555.9,135.1 559.1,134.2 562.4,133.3 565.9,132.4 569.5,131.5 573.1,130.5 576.7,129.6 580.3,128.7 583.8,127.8 587.1,126.8 590.3,125.9 593.2,125 595.9,124.1 598.3,123.1 600.4,122.2 602.2,121.3 603.5,120.4 604.5,119.5 605.1,118.5 605.4,117.6 605.4,111.8 605.1,112.7 604.5,113.7 603.5,114.6 602.2,115.5 600.4,116.4 598.3,117.3 595.9,118.3 593.2,119.2 590.3,120.1 587.1,121 583.8,122 580.3,122.9 576.7,123.8 573.1,124.7 569.5,125.7 565.9,126.6 562.4,127.5 559.1,128.4 555.9,129.3 553,130.3 550.3,131.2 547.9,132.1 545.8,133 544,134 542.7,134.9 541.7,135.8 541.1,136.7 540.9,137.7" fill="url(#gGr)" stroke="none"/>
<polyline points="562.4,130 565.9,129.1 569.5,128.2 573.1,127.2 576.7,126.3 580.3,125.4 583.8,124.5" fill="none" stroke="#a9a9b9" stroke-width="1.3" stroke-linecap="round" opacity="0.8"/>
<polyline points="540.9,143.5 541.1,142.5 541.7,141.6 542.7,140.7 544,139.8 545.8,138.8 547.9,137.9 550.3,137 553,136.1 555.9,135.1 559.1,134.2 562.4,133.3 565.9,132.4 569.5,131.5 573.1,130.5 576.7,129.6 580.3,128.7 583.8,127.8 587.1,126.8 590.3,125.9 593.2,125 595.9,124.1 598.3,123.1 600.4,122.2 602.2,121.3 603.5,120.4 604.5,119.5 605.1,118.5 605.4,117.6" fill="none" stroke="#14141b" stroke-width="1.8" stroke-linejoin="round"/>
<polyline points="540.9,137.7 541.1,136.7 541.7,135.8 542.7,134.9 544,134 545.8,133 547.9,132.1 550.3,131.2 553,130.3 555.9,129.3 559.1,128.4 562.4,127.5 565.9,126.6 569.5,125.7 573.1,124.7 576.7,123.8 580.3,122.9 583.8,122 587.1,121 590.3,120.1 593.2,119.2 595.9,118.3 598.3,117.3 600.4,116.4 602.2,115.5 603.5,114.6 604.5,113.7 605.1,112.7 605.4,111.8" fill="none" stroke="#1a1a22" stroke-width="1.25" stroke-linejoin="round"/>
</g>
<path d="M287.6,116.5 V433 A158.8,158.8 0 0 0 605.1,433 V118.5" fill="none" stroke="#1c1c26" stroke-width="1.2"/>
<path d="M351.4,116.5 V433 A94.8,94.8 0 0 0 541.1,433 V116.5" fill="none" stroke="#1c1c26" stroke-width="1.2"/>
<path d="M287.2,115.5 H351.8" stroke="#8a8a8c" stroke-width="1.4" fill="none"/>
<path d="M540.9,115.6 H602.4" stroke="#20202a" stroke-width="1.3" fill="none"/>
<path d="M319.5,113.5 V433 A126.8,126.8 0 0 0 573.1,433 V113.5" fill="none" stroke="#868689" stroke-width="1.25"/>
<path d="M319.5,112 l1.6,3 h-3.2 z" fill="#8b8b8d"/>
<circle cx="573.1" cy="114.3" r="1.6" fill="#9aa08c"/>
<circle cx="319.5" cy="433.3" r="1.5" fill="#868689"/>
<circle cx="573.1" cy="433.3" r="1.5" fill="#868689"/>
<path d="M442.5,433.5 H449.5 M446,430 V437" stroke="#7e7e86" stroke-width="1" fill="none"/>
<polygon points="202.5,368.5 202.5,384.5 206,381.2 209.3,388.6 212,387.4 208.8,380.2 213.6,380.2" fill="#fff" stroke="#000" stroke-width="1" stroke-linejoin="miter"/>
<g>
<rect x="105.8" y="523" width="4.4" height="19" fill="#1c7c1c"/>
<rect x="107.2" y="523" width="1.6" height="19" fill="#3c9c3c"/>
<polygon points="108,515 112.2,524 103.8,524" fill="#156c15"/>
<rect x="104" y="541" width="8" height="3" fill="#0a0ac8"/>
<rect x="112" y="543" width="18" height="1" fill="#c01818"/>
<polygon points="129.5,541.5 136,544 129.5,544" fill="#c01818"/>
<text x="103.7" y="512.8" font-family="'Liberation Serif',serif" font-weight="bold" font-size="12" textLength="5.6" lengthAdjust="spacingAndGlyphs" fill="#128212">Y</text>
<text x="137.4" y="549.5" font-family="'Liberation Serif',serif" font-weight="bold" font-size="11" fill="#e01010">X</text>
</g>
<!--/GEOM-->
<!--ICONS-->
<defs>
<linearGradient id="gHandle" x1="0" y1="0" x2="1" y2="0"><stop offset="0" stop-color="#2a6ad0"/><stop offset="0.5" stop-color="#8cc4f4"/><stop offset="1" stop-color="#2a6ad0"/></linearGradient>
<radialGradient id="gLens" cx="0.4" cy="0.4" r="0.7"><stop offset="0" stop-color="#e8ecf2"/><stop offset="1" stop-color="#c4cad6"/></radialGradient>
<linearGradient id="gFace" x1="0" y1="0" x2="1" y2="1"><stop offset="0" stop-color="#9cc8f4"/><stop offset="0.45" stop-color="#5c9ae4"/><stop offset="0.6" stop-color="#a8b4ec"/><stop offset="1" stop-color="#6aa6e8"/></linearGradient>
<linearGradient id="gBlueH" x1="0" y1="0" x2="1" y2="0"><stop offset="0" stop-color="#3c7ce0"/><stop offset="0.6" stop-color="#86bcf6"/><stop offset="1" stop-color="#5a98ea"/></linearGradient>
<radialGradient id="gSpec" cx="0.5" cy="0.5" r="0.5"><stop offset="0" stop-color="#fff" stop-opacity="0.95"/><stop offset="1" stop-color="#fff" stop-opacity="0"/></radialGradient>
<linearGradient id="gScreen" x1="0" y1="0" x2="0" y2="1"><stop offset="0" stop-color="#e4ecf0"/><stop offset="1" stop-color="#b4c4d0"/></linearGradient>
<clipPath id="cBall1"><circle cx="657.9" cy="41.9" r="7.8"/></clipPath>
<clipPath id="cBall2"><circle cx="680.9" cy="40" r="5.9"/></clipPath>
</defs>
<!-- 1 zoom to fit -->
<g>
<path d="M468.6,43.6 L471,46" stroke="#8890a4" stroke-width="1.8" fill="none"/>
<path d="M471.2,46 L473.5,48.3" stroke="#2860c4" stroke-width="3.8" stroke-linecap="round" fill="none"/>
<path d="M471.6,45.8 L473.6,47.8" stroke="#84bcf4" stroke-width="1.6" stroke-linecap="round" fill="none"/>
<circle cx="465" cy="39.8" r="5.6" fill="url(#gLens)" stroke="#8c8ca6" stroke-width="1.2"/>
<circle cx="465" cy="39.8" r="2.9" fill="none" stroke="#20202c" stroke-width="1.5" stroke-dasharray="2.6 1.95" stroke-dashoffset="1.3"/>
<rect x="463.8" y="38.6" width="2.4" height="2.4" fill="#b4cce4"/>
</g>
<!-- 2 zoom to area -->
<g>
<path d="M492.6,44.2 L495,46.6" stroke="#8890a4" stroke-width="1.8" fill="none"/>
<path d="M494.8,46.4 L497,48.6" stroke="#2860c4" stroke-width="3.8" stroke-linecap="round" fill="none"/>
<path d="M495.2,46.2 L497.1,48.1" stroke="#84bcf4" stroke-width="1.6" stroke-linecap="round" fill="none"/>
<circle cx="489" cy="40.3" r="5.7" fill="url(#gLens)" stroke="#8c8ca6" stroke-width="1.2"/>
<path d="M482.5,43 V34.5 H491" fill="none" stroke="#7e866a" stroke-width="1.2" stroke-dasharray="2 1.2"/>
<path d="M484.5,42.6 H490.6 V36.6" fill="none" stroke="#30303c" stroke-width="1.2" stroke-dasharray="2.2 1.1"/>
</g>
<!-- 3 previous view -->
<g>
<path d="M506.2,36.2 L510.6,40.6" stroke="#2c64c4" stroke-width="4" stroke-linecap="round" fill="none"/>
<path d="M506,35.8 L510.2,40" stroke="#b4d8fa" stroke-width="1.5" stroke-linecap="round" fill="none"/>
<path d="M510.2,40 L516.8,46.6" stroke="#2c64c4" stroke-width="7.4" stroke-linecap="butt" fill="none"/>
<path d="M509.8,40.4 L516.4,47" stroke="#7ab6f4" stroke-width="3.6" fill="none"/>
<path d="M511.4,38.8 L518,45.4" stroke="#e0f0fe" stroke-width="1.2" fill="none"/>
<path d="M509.4,41.8 L512.6,38.6" stroke="#1c4ca8" stroke-width="1" fill="none"/>
<ellipse cx="517" cy="46.8" rx="3.8" ry="2.5" transform="rotate(-45 517 46.8)" fill="#e2f1ff" stroke="#2c64c4" stroke-width="1"/>
<path d="M520.8,36.8 H514.6 M517,34.2 L514.3,36.8 L517,39.4" fill="none" stroke="#3468dc" stroke-width="1.4"/>
</g>
<!-- 4 section view -->
<g>
<path d="M529.2,36.4 C529.2,33.6 543.4,33.6 543.4,36.4 V46.6 C543.4,48 541.6,48.8 540.6,48.9 V38.6 H537.4 V47 H532.6 V47.4 H529.2 Z" fill="#3c7cdc"/>
<ellipse cx="536.3" cy="36.4" rx="7.1" ry="2.3" fill="#6cacf0"/>
<rect x="532.6" y="36.4" width="4.9" height="10.6" fill="url(#gBlueH)"/>
<rect x="529.3" y="36.2" width="3.3" height="11.2" fill="#f2dc28"/>
<rect x="537.4" y="38.2" width="3.2" height="10.8" fill="#ecc828"/>
<path d="M531.8,37 l-1.4,1.2 l1.4,1.2 l-1.4,1.2 l1.4,1.2 l-1.4,1.2 l1.4,1.2 l-1.4,1.2 l1.4,1.2" fill="none" stroke="#b89420" stroke-width="0.8"/>
<path d="M539.8,39 l-1.4,1.2 l1.4,1.2 l-1.4,1.2 l1.4,1.2 l-1.4,1.2 l1.4,1.2 l-1.4,1.2 l1.4,1.2" fill="none" stroke="#b08c20" stroke-width="0.8"/>
<rect x="540.6" y="37.6" width="2.8" height="10.4" fill="#2c62c4"/>
</g>
<!-- 5 view orientation -->
<g>
<path d="M551,39.2 L556.4,34.3 H566.6 V44.8 L562,49.6 V39.2 Z" fill="#eceef4"/>
<path d="M551,39.2 L556.4,34.3 H566.6 V44.8 L562,49.6 M562,39.2 L566.6,34.3 M556.4,34.3 V39 M562,45 H566.6" fill="none" stroke="#34343e" stroke-width="1"/>
<rect x="551.2" y="39.2" width="10.6" height="10.4" fill="url(#gFace)" stroke="#2a62c4" stroke-width="1.2"/>
<path d="M559.5,35 V38.6 M558,36.9 L559.5,38.8 L561,36.9 M558.2,36 H560.8" fill="none" stroke="#d02020" stroke-width="1.1"/>
<path d="M566,42.5 H562.6 M564.3,41 L562.4,42.5 L564.3,44 M565,41.2 V43.8" fill="none" stroke="#d02020" stroke-width="1.1"/>
</g>
<!-- 6 display style -->
<g>
<path d="M584.2,38.6 L588.6,34.3 H600 L595.7,38.6 Z" fill="#dfe3ea"/>
<path d="M590.6,38.6 L594.6,34.3 H600 L595.7,38.6 Z" fill="#6caaf2"/>
<path d="M595.7,38.6 L600,34.3 V44.8 L595.7,49.6 Z" fill="#3a6ccc"/>
<rect x="584.2" y="38.6" width="11.5" height="11" fill="#dde1e8"/>
<rect x="589.8" y="38.6" width="5.9" height="11" fill="url(#gBlueH)"/>
<path d="M584.2,38.6 L588.6,34.3 H594 M584.2,38.6 H595.7 V49.6 H584.2 Z" fill="none" stroke="#565e70" stroke-width="1"/>
</g>
<!-- 7 glasses -->
<g fill="none" stroke="#6c6c78" stroke-width="1.2">
<ellipse cx="619.6" cy="43.6" rx="2.6" ry="3.3" fill="#d4e2f0"/>
<ellipse cx="626.8" cy="45.2" rx="2.6" ry="3.3" fill="#d4e2f0"/>
<path d="M618.8,40.4 C619,37.6 621,36.2 622.4,36.8 C623.4,37.3 623.6,38.6 623.4,39.2"/>
<path d="M622.2,42.6 C623,42 624,42.4 624.4,43.4"/>
<path d="M628.6,42.6 C629,41 630.4,40.2 631.4,40.6 C632.4,41 632.6,42.2 632.4,43"/>
<path d="M618.6,45 L620.6,42.2 M625.8,46.6 L627.8,43.8" stroke="#5c9ae0" stroke-width="1"/>
</g>
<!-- 8 appearance ball -->
<g>
<g clip-path="url(#cBall1)">
<rect x="649" y="33" width="10.4" height="10.4" fill="#4c90da"/>
<rect x="659.4" y="33" width="8" height="10.4" fill="#e0422e"/>
<rect x="649" y="43.4" width="10.4" height="8" fill="#36b83a"/>
<rect x="659.4" y="43.4" width="8" height="8" fill="#e8cc3c"/>
<path d="M661,51 L667,44" stroke="#e89838" stroke-width="2" opacity="0.7"/>
<circle cx="655.4" cy="38.8" r="2.6" fill="url(#gSpec)"/>
</g>
<circle cx="657.9" cy="41.9" r="7.8" fill="none" stroke="#7c6c74" stroke-width="0.7" opacity="0.8"/>
</g>
<!-- 9 scene ball -->
<g>
<rect x="673" y="42" width="16" height="7.8" fill="#f4f4f4"/>
<path d="M675.6,42 h2.7 v2.6 h-2.7 z M681,42 h2.7 v2.6 h-2.7 z M686.4,42 h2.6 v2.6 h-2.6 z M673,44.6 h2.6 v2.6 h-2.6 z M678.3,44.6 h2.7 v2.6 h-2.7 z M683.7,44.6 h2.7 v2.6 h-2.7 z M675.6,47.2 h2.7 v2.6 h-2.7 z M681,47.2 h2.7 v2.6 h-2.7 z M686.4,47.2 h2.6 v2.6 h-2.6 z" fill="#1c1c20"/>
<g clip-path="url(#cBall2)">
<rect x="674" y="33" width="7.8" height="8.2" fill="#4c90da"/>
<rect x="681.8" y="33" width="6" height="8.2" fill="#e0422e"/>
<rect x="674" y="41.2" width="7.8" height="6" fill="#36b83a"/>
<rect x="681.8" y="41.2" width="6" height="6" fill="#e8cc3c"/>
<circle cx="679" cy="37.6" r="2.2" fill="url(#gSpec)"/>
</g>
<circle cx="680.9" cy="40" r="5.9" fill="none" stroke="#6c5c64" stroke-width="0.7" opacity="0.8"/>
</g>
<!-- 10 view settings monitor -->
<g>
<rect x="706.2" y="35.2" width="14.8" height="11.4" fill="#e8ece8" stroke="#8a9288" stroke-width="1"/>
<rect x="708" y="37" width="11.2" height="8" fill="url(#gScreen)" stroke="#32324a" stroke-width="1.1"/>
<rect x="712.8" y="46.8" width="1.8" height="2" fill="#54545c"/>
<path d="M708.6,49.2 H718.8" stroke="#5c5c64" stroke-width="1.2"/>
<path d="M708.2,50.2 H719.2" stroke="#e0e4ea" stroke-width="0.8"/>
<path d="M709.4,39.6 L713.4,35.6 L716,38.6 L718,36.2 L721.8,34.4 L722,37.4 L718.6,39.6 L716,41.6 L713,38.8 L710.6,41 Z" fill="#cc8430"/>
<path d="M711,39.4 L713.4,37 L715.8,40 L718.4,37.4" fill="none" stroke="#fbe8c8" stroke-width="1" stroke-dasharray="1 1"/>
<path d="M717.6,34.4 H721.6" stroke="#eec890" stroke-width="1.2"/>
</g>
<!-- dropdown arrows -->
<g fill="#4e5566">
<path d="M570.8,42 h5.6 l-2.8,3.1 z"/>
<path d="M603.8,42 h5.6 l-2.8,3.1 z"/>
<path d="M636.8,42 h5.6 l-2.8,3.1 z"/>
<path d="M692.8,42 h5.6 l-2.8,3.1 z"/>
<path d="M725.8,42 h5.6 l-2.8,3.1 z"/>
</g>
<!-- panel tab icons -->
<g>
<rect x="0" y="37" width="11" height="17.8" fill="#000"/>
<text x="-2.2" y="49" font-family="'Liberation Mono',monospace" font-size="10.5" fill="#ffff00" textLength="11.6" lengthAdjust="spacingAndGlyphs">CW</text>
<rect x="0" y="52" width="11" height="1" fill="#c40000"/>
<rect x="25.4" y="38.2" width="12.8" height="13.6" fill="#c0c0c0"/>
<rect x="24.6" y="38" width="11.6" height="1.4" fill="#000"/><rect x="24.6" y="38" width="1.6" height="14" fill="#000"/><rect x="24.6" y="50.6" width="13.4" height="1.4" fill="#000"/>
<rect x="23" y="53.1" width="15.8" height="1.6" fill="#000"/>
<rect x="30" y="40" width="3.6" height="3.2" fill="#f01010"/>
<rect x="31" y="43.2" width="1.6" height="1.8" fill="#f01010"/>
<rect x="31" y="45.4" width="1.8" height="0.8" fill="#1010e8"/>
<rect x="29.4" y="46" width="5" height="1.6" fill="#1010e8"/>
<rect x="29" y="48.6" width="6" height="1.5" fill="#10d010"/>
<path d="M51.4,42.4 L54.8,45.6 L51.4,48.8 M55.6,42.4 L59,45.6 L55.6,48.8" fill="none" stroke="#585a78" stroke-width="1.3"/>
<path d="M71.8,295.4 v4.6 l-2.9,-2.3 z M71.8,303.1 v4.6 l-2.9,-2.3 z M71.8,311.1 v4.6 l-2.9,-2.3 z" fill="#4e5888"/>
</g>

<!--/ICONS-->
</svg>
</body>
</html>
